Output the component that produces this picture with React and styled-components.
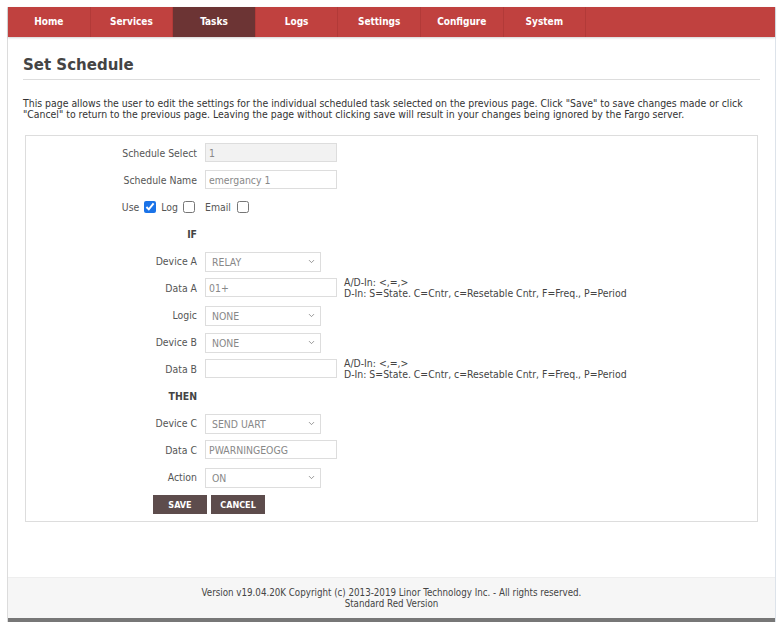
import React from "react";
import styled, { createGlobalStyle } from "styled-components";
import { ChevronDown } from "lucide-react";

const GlobalStyle = createGlobalStyle`
  body {
    margin: 0;
    background: #fff;
    font-family: "DejaVu Sans", Verdana, sans-serif;
    font-stretch: condensed;
    color: #333;
  }
`;

const Page = styled.div`
  margin: 7px 0 0 7px;
  width: 767px;
  border-left: 1px solid #dcdcdc;
  border-right: 1px solid #dde3ea;
  background: #fff;
`;

const Nav = styled.nav`
  display: flex;
  height: 30px;
  background: #c0413f;
  box-shadow: 0 1px 2px rgba(0, 0, 0, 0.18);
`;

const NavItem = styled.a`
  box-sizing: border-box;
  width: 82.6px;
  display: flex;
  align-items: center;
  justify-content: center;
  padding-bottom: 2px;
  border-right: 1px solid #b23a38;
  background: ${(p) => (p.$active ? "#6c3434" : "transparent")};
  color: #fff;
  font-size: 10px;
  font-weight: bold;
  cursor: pointer;
`;

const Content = styled.div`
  padding: 0 15px 0 15px;
`;

const Title = styled.h1`
  margin: 19px 0 0;
  padding-bottom: 5px;
  border-bottom: 1px solid #ddd;
  font-size: 15px;
  font-stretch: normal;
  font-weight: bold;
  color: #444;
`;

const Intro = styled.p`
  margin: 18px 0 0;
  font-size: 10.4px;
  line-height: 11px;
  color: #333;
`;

const FormBox = styled.div`
  margin: 15px 2px 0 2px;
  padding: 3px 0 4px;
  border: 1px solid #ddd;
`;

const Row = styled.div`
  display: flex;
  align-items: center;
  height: 27px;
  padding-left: ${(p) => p.$indent || 0}px;
  gap: ${(p) => (p.$indent ? 4 : 8)}px;
`;

const Label = styled.div`
  width: 171px;
  flex: none;
  text-align: right;
  font-size: 10.4px;
  color: ${(p) => (p.$strong ? "#444" : "#555")};
  font-weight: ${(p) => (p.$strong ? "bold" : "normal")};
`;

const Checks = styled.div`
  box-sizing: border-box;
  width: 171px;
  flex: none;
  display: flex;
  justify-content: flex-end;
  align-items: center;
  gap: 5px;
  padding-right: 2px;
  font-size: 10.4px;
  color: #555;
`;

const CheckGroup = styled.div`
  display: flex;
  align-items: center;
  gap: 6px;
  font-size: 10.4px;
  color: #555;
`;

const Check = styled.input.attrs({ type: "checkbox" })`
  width: 12px;
  height: 12px;
  margin: 1px 0 0;
  accent-color: #1a73e8;
`;

const TextInput = styled.input`
  box-sizing: border-box;
  width: 132px;
  height: 19px;
  padding: 0 3px;
  border: 1px solid #ddd;
  background: ${(p) => (p.disabled ? "#f2f2f2" : "#fff")};
  font-family: inherit;
  font-stretch: condensed;
  font-size: 10.4px;
  color: #888;
  outline: none;
`;

const SelectWrap = styled.div`
  position: relative;
  width: 116px;
  height: 20px;
`;

const Select = styled.select`
  box-sizing: border-box;
  width: 100%;
  height: 100%;
  padding: 0 3px 0 6px;
  border: 1px solid #ddd;
  background: #fff;
  appearance: none;
  font-family: inherit;
  font-stretch: condensed;
  font-size: 10.4px;
  color: #888;
  outline: none;
`;

const Chevron = styled(ChevronDown)`
  position: absolute;
  right: 5px;
  top: 6px;
  pointer-events: none;
  color: #777;
`;

const Hint = styled.div`
  margin-left: -1px;
  font-size: 10.4px;
  line-height: 11px;
  color: #444;
`;

const Button = styled.button`
  width: 54px;
  height: 19px;
  margin-top: 2px;
  padding: 0;
  border: none;
  background: #5d4c4c;
  color: #fff;
  font-family: inherit;
  font-stretch: condensed;
  font-size: 9px;
  font-weight: bold;
  cursor: pointer;
`;

const Footer = styled.footer`
  margin-top: 55px;
  height: 40px;
  border-top: 1px solid #eee;
  border-bottom: 4px solid #777;
  background: #f6f6f6;
  display: flex;
  flex-direction: column;
  align-items: center;
  justify-content: center;
  font-family: "Liberation Sans Narrow", "DejaVu Sans Condensed", "DejaVu Sans", sans-serif;
  font-size: 9.7px;
  line-height: 11px;
  color: #444;
`;

const tabs = ["Home", "Services", "Tasks", "Logs", "Settings", "Configure", "System"];

const Dropdown = ({ value }) => (
  <SelectWrap>
    <Select defaultValue={value}>
      <option>{value}</option>
    </Select>
    <Chevron size={9} strokeWidth={2} />
  </SelectWrap>
);

const DataHint = () => (
  <Hint>
    A/D-In: &lt;,=,&gt;
    <br />
    D-In: S=State. C=Cntr, c=Resetable Cntr, F=Freq., P=Period
  </Hint>
);

export default function App() {
  return (
    <>
      <GlobalStyle />
      <Page>
        <Nav>
          {tabs.map((t) => (
            <NavItem key={t} $active={t === "Tasks"}>
              {t}
            </NavItem>
          ))}
        </Nav>
        <Content>
          <Title>Set Schedule</Title>
          <Intro>
            This page allows the user to edit the settings for the individual scheduled task
            selected on the previous page. Click "Save" to save changes made or click "Cancel" to
            return to the previous page. Leaving the page without clicking save will result in your
            changes being ignored by the Fargo server.
          </Intro>
          <FormBox>
            <Row>
              <Label>Schedule Select</Label>
              <TextInput disabled defaultValue="1" />
            </Row>
            <Row>
              <Label>Schedule Name</Label>
              <TextInput defaultValue="emergancy 1" />
            </Row>
            <Row>
              <Checks>
                Use <Check defaultChecked /> Log <Check />
              </Checks>
              <CheckGroup>
                Email <Check />
              </CheckGroup>
            </Row>
            <Row>
              <Label $strong>IF</Label>
            </Row>
            <Row>
              <Label>Device A</Label>
              <Dropdown value="RELAY" />
            </Row>
            <Row>
              <Label>Data A</Label>
              <TextInput defaultValue="01+" />
              <DataHint />
            </Row>
            <Row>
              <Label>Logic</Label>
              <Dropdown value="NONE" />
            </Row>
            <Row>
              <Label>Device B</Label>
              <Dropdown value="NONE" />
            </Row>
            <Row>
              <Label>Data B</Label>
              <TextInput defaultValue="" />
              <DataHint />
            </Row>
            <Row>
              <Label $strong>THEN</Label>
            </Row>
            <Row>
              <Label>Device C</Label>
              <Dropdown value="SEND UART" />
            </Row>
            <Row>
              <Label>Data C</Label>
              <TextInput defaultValue="PWARNINGEOGG" />
            </Row>
            <Row>
              <Label>Action</Label>
              <Dropdown value="ON" />
            </Row>
            <Row $indent={127}>
              <Button>SAVE</Button>
              <Button>CANCEL</Button>
            </Row>
          </FormBox>
        </Content>
        <Footer>
          <div>Version v19.04.20K Copyright (c) 2013-2019 Linor Technology Inc. - All rights reserved.</div>
          <div>Standard Red Version</div>
        </Footer>
      </Page>
    </>
  );
}
